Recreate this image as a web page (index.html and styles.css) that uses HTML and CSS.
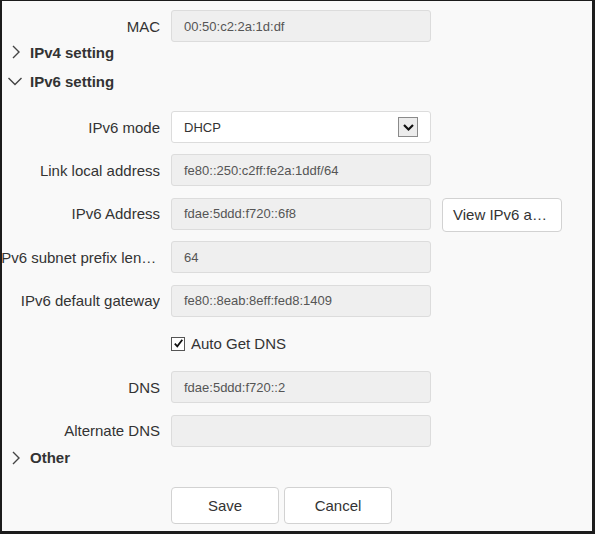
FILE: index.html
```html
<!DOCTYPE html>
<html>
<head>
<meta charset="utf-8">
<link rel="stylesheet" href="styles.css">
</head>
<body>
<div class="frame">
  <div class="form">
    <div class="row">
      <label class="lbl">MAC</label>
      <div class="field disabled">00:50:c2:2a:1d:df</div>
    </div>
    <div class="section first">
      <svg class="chev" width="12" height="16" viewBox="0 0 12 16"><path d="M3 2 L9 8 L3 14" fill="none" stroke="#444" stroke-width="1.4"/></svg>
      <span>IPv4 setting</span>
    </div>
    <div class="section">
      <svg class="chev down" width="16" height="12" viewBox="0 0 16 12"><path d="M1.5 3 L8 9.5 L14.5 3" fill="none" stroke="#444" stroke-width="1.4"/></svg>
      <span>IPv6 setting</span>
    </div>
    <div class="rows">
      <div class="row">
        <label class="lbl">IPv6 mode</label>
        <div class="field select">
          <span>DHCP</span>
          <span class="arrow"><svg width="13" height="9" viewBox="0 0 13 9"><path d="M2 2 L6.5 6.5 L11 2" fill="none" stroke="#111" stroke-width="2.2"/></svg></span>
        </div>
      </div>
      <div class="row">
        <label class="lbl">Link local address</label>
        <div class="field disabled">fe80::250:c2ff:fe2a:1ddf/64</div>
      </div>
      <div class="row">
        <label class="lbl">IPv6 Address</label>
        <div class="field disabled">fdae:5ddd:f720::6f8</div>
        <button class="btn view">View IPv6 address</button>
      </div>
      <div class="row">
        <label class="lbl wide">IPv6 subnet prefix length</label>
        <div class="field disabled">64</div>
      </div>
      <div class="row">
        <label class="lbl">IPv6 default gateway</label>
        <div class="field disabled">fe80::8eab:8eff:fed8:1409</div>
      </div>
      <div class="row">
        <span class="lbl"></span>
        <div class="check">
          <span class="box"><svg width="11" height="11" viewBox="0 0 11 11"><path d="M1.8 5.6 L4.3 8.3 L9.3 1.8" fill="none" stroke="#111" stroke-width="1.8"/></svg></span>
          <span>Auto Get DNS</span>
        </div>
      </div>
      <div class="row">
        <label class="lbl">DNS</label>
        <div class="field disabled">fdae:5ddd:f720::2</div>
      </div>
      <div class="row">
        <label class="lbl">Alternate DNS</label>
        <div class="field disabled"></div>
      </div>
    </div>
    <div class="section other">
      <svg class="chev" width="12" height="16" viewBox="0 0 12 16"><path d="M3 2 L9 8 L3 14" fill="none" stroke="#444" stroke-width="1.4"/></svg>
      <span>Other</span>
    </div>
    <div class="actions">
      <button class="btn action">Save</button>
      <button class="btn action">Cancel</button>
    </div>
  </div>
</div>
</body>
</html>
```
FILE: styles.css
```css
* { box-sizing: border-box; }
html, body { margin: 0; padding: 0; }
body {
  width: 595px;
  height: 534px;
  font-family: "Liberation Sans", Arial, sans-serif;
  color: #333;
}
.frame {
  width: 595px;
  height: 534px;
  background: #f9f9f9;
  border-style: solid;
  border-color: #1c1c1c;
  border-width: 1px 3px 3px 2px;
  overflow: hidden;
}
.form {
  padding-top: 9px;
}
.rows {
  display: flex;
  flex-direction: column;
  gap: 11.4px;
  margin-top: 20px;
}
.row {
  display: flex;
  align-items: center;
  height: 32px;
}
.lbl {
  width: 158px;
  flex: none;
  margin-right: 11px;
  text-align: right;
  font-size: 15px;
  color: #333;
  white-space: nowrap;
  overflow: hidden;
  text-overflow: ellipsis;
}
.lbl.wide {
  width: 163px;
  margin-left: -5px;
}
.field {
  width: 260px;
  height: 32px;
  border: 1px solid #dcdcdc;
  border-radius: 3px;
  padding: 0 12px;
  font-size: 13px;
  color: #555;
  display: flex;
  align-items: center;
  flex: none;
}
.field.disabled {
  background: #efefef;
}
.field.select {
  background: #fff;
  justify-content: space-between;
  padding-right: 12px;
  color: #333;
}
.arrow {
  width: 20px;
  height: 20px;
  border: 1px solid #8a8a8a;
  background: #ececec;
  display: flex;
  align-items: center;
  justify-content: center;
}
.section {
  display: flex;
  align-items: center;
  height: 20px;
  font-size: 15px;
  font-weight: bold;
  color: #333;
  padding-left: 8px;
}
.section.first { margin-top: 0; }
.section + .section { margin-top: 9px; }
.section .chev { margin-right: 8px; }
.section .chev.down { margin-left: -3px; margin-right: 7px; }
.section.other { margin-top: 1px; }
.btn {
  font-family: "Liberation Sans", Arial, sans-serif;
  font-size: 15px;
  color: #333;
  background: #fff;
  border: 1px solid #d2d2d2;
  border-radius: 4px;
  cursor: pointer;
}
.btn.view {
  margin-left: 11px;
  width: 120px;
  height: 34px;
  padding: 0 10px;
  text-align: left;
  white-space: nowrap;
  overflow: hidden;
  text-overflow: ellipsis;
  align-self: flex-start;
}
.check {
  display: flex;
  align-items: center;
  font-size: 15px;
  color: #333;
}
.box {
  width: 14px;
  height: 14px;
  border: 1px solid #555;
  background: #fff;
  display: flex;
  align-items: center;
  justify-content: center;
  margin-right: 6px;
}
.actions {
  display: flex;
  gap: 5px;
  padding-left: 169px;
  margin-top: 19px;
}
.btn.action {
  width: 108px;
  height: 37px;
}
```
